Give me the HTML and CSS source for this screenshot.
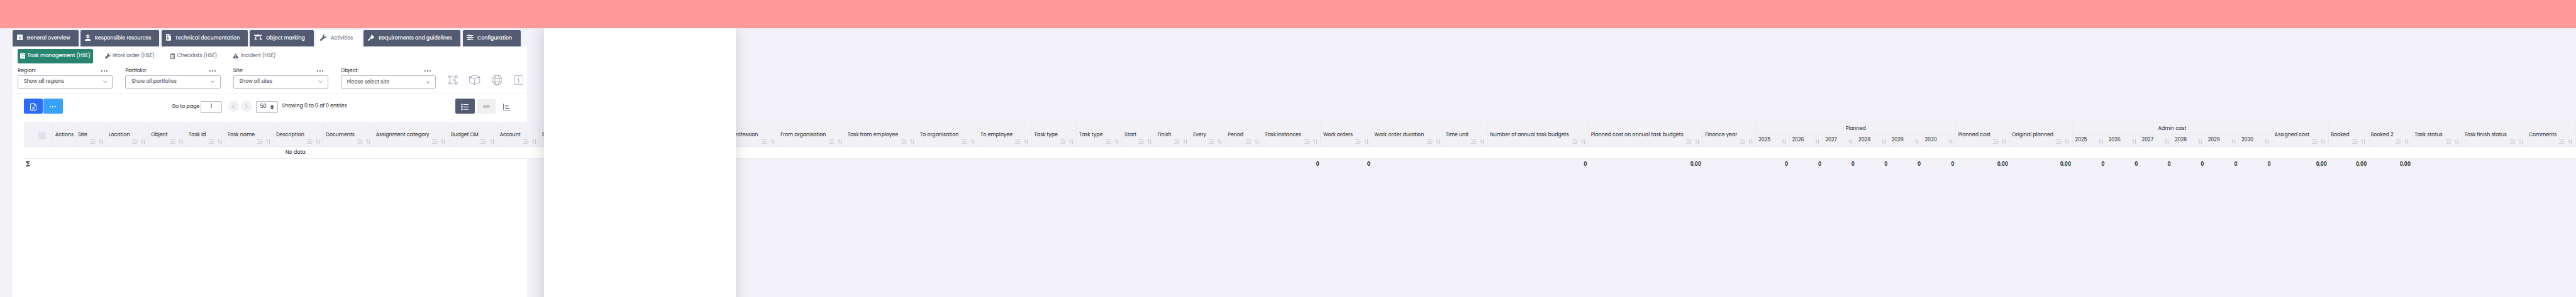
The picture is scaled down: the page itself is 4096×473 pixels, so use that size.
FILE: index.html
```html
<!DOCTYPE html>
<html lang="en">
<head>
<meta charset="utf-8">
<title>Task management</title>
<link rel="stylesheet" href="styles.css">
</head>
<body>
<svg class="sprite" aria-hidden="true">
  <symbol id="menu" viewBox="0 0 14 11"><path d="M0 1h12M2 5.5h12M0 10h12" fill="none" stroke="currentColor" stroke-width="1.2"/></symbol>
  <symbol id="sort" viewBox="0 0 11 11"><path d="M3 11V1M.5 3.5L3 1l2.500 2.500M8.300 0v10M5.800 7.500l2.500 2.500 2.500-2.500" fill="none" stroke="currentColor" stroke-width="1.1"/></symbol>
  <symbol id="wrench" viewBox="0 0 16 16"><path d="M15.700 3.600l-2.600 2.500-2.700-.6-.5-2.600L12.400.3C10.500-.3 8.400.2 7.200 1.800 6.300 3 6.200 4.500 6.700 5.900L.7 11.900a2.200 2.200 0 0 0 3.300 3.300l6-6c1.400.5 3 .3 4.200-.7 1.500-1.200 2-3.200 1.500-4.900zM2.500 14.200a.8.8 0 1 1 0-1.600.8.8 0 0 1 0 1.600z" fill="currentColor"/></symbol>
  <symbol id="chev" viewBox="0 0 10 6"><path d="M.8.8L5 5 9.200.8" fill="none" stroke="currentColor" stroke-width="1.100"/></symbol>
</svg>
<div class="page">
  <header class="banner"></header>
  <main class="main">
    <nav class="tabs">
      <a class="tab t1"><svg width="14" height="14" viewBox="0 0 14 14"><rect width="14" height="14" rx="2" fill="#fff"/><path d="M5.500 6h2v4M5 10.300h4.200" stroke="#525b72" stroke-width="1.200" fill="none"/><rect x="6.200" y="3" width="1.600" height="1.600" fill="#525b72"/></svg>General overview</a>
      <a class="tab t2"><svg width="14" height="15" viewBox="0 0 14 15"><path d="M2.500 4.500h9v.9h-9zM3.200 4C3.200 2 4.500.8 6 .5V3h.4V0h1.200v3H8V.5c1.500.3 2.800 1.500 2.800 3.500zM3.700 6h6.600A3.300 3.300 0 0 1 3.700 6zM0 15c0-3 1.800-4.700 4.200-4.700h5.600C12.200 10.300 14 12 14 15z" fill="#fff"/></svg>Responsible resources</a>
      <a class="tab t3"><svg width="12" height="16" viewBox="0 0 12 16"><path d="M1.500 0H8v4h4v10.500a1.500 1.500 0 0 1-1.500 1.500h-9A1.500 1.500 0 0 1 0 14.500v-13A1.500 1.500 0 0 1 1.500 0zM9 0l3 3H9z" fill="#fff"/><path d="M4 1v6" stroke="#525b72" stroke-width="2" stroke-dasharray="1 1"/><path d="M3 8h2l1 4a2 1.800 0 0 1-4 0z" fill="#525b72"/><circle cx="4" cy="12" r=".8" fill="#fff"/></svg>Technical documentation</a>
      <a class="tab t4"><svg width="19" height="14" viewBox="0 0 19 14"><g fill="none" stroke="#fff" stroke-width="1.600"><path d="M2 2h15M7 2C4.500 3.500 3.500 6 3.500 9.500M12 2c2.500 1.500 3.500 4 3.500 7.500"/><circle cx="3.500" cy="11.500" r="1.700"/><circle cx="15.500" cy="11.500" r="1.700"/></g><path d="M7 0h5v4.500H7z" fill="#fff"/><circle cx="1.500" cy="2" r="1.500" fill="#fff"/><circle cx="17.500" cy="2" r="1.500" fill="#fff"/></svg>Object marking</a>
      <a class="tab t5 on"><svg width="15" height="15"><use href="#wrench"/></svg>Activities</a>
      <a class="tab t6"><svg width="15" height="15" viewBox="0 0 15 15"><path d="M7.500.5l1.800-.5L15 6l-.7 1.700-1.200.2-3 2.700-1.300.2-3.300-3.400.2-1.300L8.400 3zM5 8.200l2 2L2.600 14.600a1 1 0 0 1-1.500 0l-.8-.8a1 1 0 0 1 0-1.400z" fill="#fff"/></svg>Requirements and guidelines</a>
      <a class="tab t7"><svg width="16" height="14" viewBox="0 0 16 14"><g stroke="#fff" stroke-width="1.700" fill="#525b72"><path d="M0 2.300h16M0 7h16M0 11.700h16"/><circle cx="5.500" cy="2.300" r="1.500"/><circle cx="11" cy="7" r="1.500"/><circle cx="5.500" cy="11.700" r="1.500"/></g></svg>Configuration</a>
    </nav>
    <section class="card">
      <nav class="subtabs">
        <a class="sub s1"><svg width="13" height="14" viewBox="0 0 13 14"><path d="M2.500 0h2v1.500h4V0h2v1.500H13V4H0V1.500h2.500zM0 5h13v7.500a1.500 1.500 0 0 1-1.500 1.500h-10A1.500 1.500 0 0 1 0 12.500z" fill="#fff"/><path d="M4 9.300l1.800 1.700L9 7.800" fill="none" stroke="#26846f" stroke-width="1.200"/></svg>Task management (HSE)</a>
        <a class="sub s2"><svg width="13" height="13"><use href="#wrench"/></svg>Work order (HSE)</a>
        <a class="sub s3"><svg width="11" height="13" viewBox="0 0 11 13"><path d="M1 2h9v10.300H1z" fill="none" stroke="currentColor" stroke-width="1.500"/><path d="M3 .5h5V4H3z" fill="currentColor"/><path d="M3 6.500h1M5 6.500h3M3 9h1M5 9h3" stroke="currentColor"/></svg>Checklists (HSE)</a>
        <a class="sub s4"><svg width="14" height="12" viewBox="0 0 14 12"><path d="M7 0l7 12H0z" fill="currentColor"/><path d="M7 4v4M7 9v1.300" stroke="#fff" stroke-width="1.300"/></svg>Incident (HSE)</a>
      </nav>
      <div class="filters">
        <div class="field"><div class="lab">Region:<i class="dots"></i></div><div class="select">Show all regions<svg width="10" height="6"><use href="#chev"/></svg></div></div>
        <div class="field"><div class="lab">Portfolio:<i class="dots"></i></div><div class="select">Show all portfolios<svg width="10" height="6"><use href="#chev"/></svg></div></div>
        <div class="field"><div class="lab">Site:<i class="dots"></i></div><div class="select">Show all sites<svg width="10" height="6"><use href="#chev"/></svg></div></div>
        <div class="field"><div class="lab">Object:<i class="dots"></i></div><div class="select tall">Please select site<svg width="10" height="6"><use href="#chev"/></svg></div></div>
        <div class="tools">
          <svg width="22" height="22" viewBox="0 0 22 22"><path d="M5.500 3h11M3 5.500v11M5.500 19h11M17.500 5.200l-2.500 3.600M17.500 16.800L15 13.200"/><circle cx="3" cy="3" r="2.250"/><circle cx="19" cy="3" r="2.250"/><circle cx="3" cy="19" r="2.250"/><circle cx="19" cy="19" r="2.250"/><circle cx="14" cy="11" r="2.250"/></svg>
          <svg width="26" height="24" viewBox="0 0 26 24"><path d="M13 .8l12 4.200v13.500L13 23.200 1 18.500V5zM1 5l12 4.800L25 5M13 9.800v13.400"/></svg>
          <svg width="25" height="25" viewBox="0 0 25 25"><circle cx="12.500" cy="12.500" r="11.700"/><ellipse cx="12.500" cy="12.500" rx="5.500" ry="11.700"/><path d="M2 8.300h21M2 16.700h21"/></svg>
          <svg width="22" height="22" viewBox="0 0 22 22"><rect x=".8" y=".8" width="20.400" height="20.400" rx="2"/><path d="M8.500 9.500h3v6M8 15.800h7M10.600 6.300h1.600"/></svg>
        </div>
      </div>
      <div class="toolbar">
        <span class="btn blue"><svg width="15" height="19" viewBox="0 0 15 19"><path d="M1 2.500A1.500 1.500 0 0 1 2.500 1H9.500L14 5.500v11a1.500 1.500 0 0 1-1.500 1.500h-10A1.500 1.500 0 0 1 1 16.500zM9.500 1v4.500H14M5 9l5 7M10 9l-5 7" fill="none" stroke="#fff" stroke-width="1.500"/></svg></span>
        <span class="btn sky"><i class="dots big"></i></span>
        <span class="goto">Go to page</span><span class="box num">1</span>
        <span class="round prev"><svg width="6" height="11" viewBox="0 0 6 11"><path d="M5 .7L1 5.500l4 4.800" fill="none" stroke="#9c9cae" stroke-width="1.200"/></svg></span>
        <span class="round"><svg width="6" height="11" viewBox="0 0 6 11"><path d="M1 .7l4 4.800-4 4.800" fill="none" stroke="#9c9cae" stroke-width="1.200"/></svg></span>
        <span class="box size">50<svg width="8" height="11" viewBox="0 0 8 11"><path d="M0 4.700L4 0l4 4.700zM0 6.300h8L4 11z" fill="#333"/></svg></span>
        <span class="showing">Showing 0 to 0 of 0 entries</span>
        <span class="btn dark"><svg width="18" height="16" viewBox="0 0 18 16"><path d="M5.500 2.200H18M5.500 8H18M5.500 13.800H18" stroke="#fff" stroke-width="1.600"/><path d="M.8.8h2.600v2.600H.8zM.8 6.600h2.600v2.600H.8zM.8 12.400h2.600V15H.8z" fill="none" stroke="#fff" stroke-width="1.300"/></svg></span>
        <span class="btn grey"><svg width="16" height="7" viewBox="0 0 16 7"><path d="M0 1.200h16" stroke="#8e939f" stroke-width="2"/><path d="M0 6h16" stroke="#525b72" stroke-width="1.200"/></svg></span>
        <svg class="chart" width="18" height="17" viewBox="0 0 18 17"><path d="M.7 0v14.500q0 1.500 1.500 1.500H18M4.500 4.500h9M4.500 7.700h7M4.500 11.200h11" fill="none" stroke="#525b72" stroke-width="1.300"/></svg>
      </div>
    </section>
    <section class="grid">
      <div class="row head">
        <div class="h check"><i></i></div>
        <div class="h"><b>Actions</b></div>
        <div class="h"><b>Site</b><span><svg class="m"><use href="#menu"/></svg><svg class="s"><use href="#sort"/></svg></span></div>
        <div class="h"><b>Location</b><span><svg class="m"><use href="#menu"/></svg><svg class="s"><use href="#sort"/></svg></span></div>
        <div class="h"><b>Object</b><span><svg class="m"><use href="#menu"/></svg><svg class="s"><use href="#sort"/></svg></span></div>
        <div class="h"><b>Task id</b><span><svg class="m"><use href="#menu"/></svg><svg class="s"><use href="#sort"/></svg></span></div>
        <div class="h"><b>Task name</b><span><svg class="m"><use href="#menu"/></svg><svg class="s"><use href="#sort"/></svg></span></div>
        <div class="h"><b>Description</b><span><svg class="m"><use href="#menu"/></svg><svg class="s"><use href="#sort"/></svg></span></div>
        <div class="h"><b>Documents</b><span><svg class="m"><use href="#menu"/></svg><svg class="s"><use href="#sort"/></svg></span></div>
        <div class="h"><b>Assignment category</b><span><svg class="m"><use href="#menu"/></svg><svg class="s"><use href="#sort"/></svg></span></div>
        <div class="h"><b>Budget OM</b><span><svg class="m"><use href="#menu"/></svg><svg class="s"><use href="#sort"/></svg></span></div>
        <div class="h"><b>Account</b><span><svg class="m"><use href="#menu"/></svg><svg class="s"><use href="#sort"/></svg></span></div>
        <div class="h"><b>S</b></div>
        <div class="h"><b>Profession</b><span><svg class="m"><use href="#menu"/></svg><svg class="s"><use href="#sort"/></svg></span></div>
        <div class="h"><b>From organisation</b><span><svg class="m"><use href="#menu"/></svg><svg class="s"><use href="#sort"/></svg></span></div>
        <div class="h"><b>Task from employee</b><span><svg class="m"><use href="#menu"/></svg><svg class="s"><use href="#sort"/></svg></span></div>
        <div class="h"><b>To organisation</b><span><svg class="m"><use href="#menu"/></svg><svg class="s"><use href="#sort"/></svg></span></div>
        <div class="h"><b>To employee</b><span><svg class="m"><use href="#menu"/></svg><svg class="s"><use href="#sort"/></svg></span></div>
        <div class="h"><b>Task type</b><span><svg class="m"><use href="#menu"/></svg><svg class="s"><use href="#sort"/></svg></span></div>
        <div class="h"><b>Task type</b><span><svg class="m"><use href="#menu"/></svg><svg class="s"><use href="#sort"/></svg></span></div>
        <div class="h"><b>Start</b><span><svg class="m"><use href="#menu"/></svg><svg class="s"><use href="#sort"/></svg></span></div>
        <div class="h"><b>Finish</b><span><svg class="m"><use href="#menu"/></svg><svg class="s"><use href="#sort"/></svg></span></div>
        <div class="h"><b>Every</b><span><svg class="m"><use href="#menu"/></svg><svg class="s"><use href="#sort"/></svg></span></div>
        <div class="h"><b>Period</b><span><svg class="m"><use href="#menu"/></svg><svg class="s"><use href="#sort"/></svg></span></div>
        <div class="h"><b>Task instances</b><span><svg class="m"><use href="#menu"/></svg><svg class="s"><use href="#sort"/></svg></span></div>
        <div class="h"><b>Work orders</b><span><svg class="m"><use href="#menu"/></svg><svg class="s"><use href="#sort"/></svg></span></div>
        <div class="h"><b>Work order duration</b><span><svg class="m"><use href="#menu"/></svg><svg class="s"><use href="#sort"/></svg></span></div>
        <div class="h"><b>Time unit</b><span><svg class="m"><use href="#menu"/></svg><svg class="s"><use href="#sort"/></svg></span></div>
        <div class="h"><b>Number of annual task budgets</b><span><svg class="m"><use href="#menu"/></svg><svg class="s"><use href="#sort"/></svg></span></div>
        <div class="h"><b>Planned cost on annual task budgets</b><span><svg class="m"><use href="#menu"/></svg><svg class="s"><use href="#sort"/></svg></span></div>
        <div class="h"><b>Finance year</b><span><svg class="m"><use href="#menu"/></svg><svg class="s"><use href="#sort"/></svg></span></div>
        <div class="group"><div class="gt">Planned</div>
          <div class="y">2025<svg class="s"><use href="#sort"/></svg></div><div class="y">2026<svg class="s"><use href="#sort"/></svg></div><div class="y">2027<svg class="s"><use href="#sort"/></svg></div><div class="y">2028<svg class="s"><use href="#sort"/></svg></div><div class="y">2029<svg class="s"><use href="#sort"/></svg></div><div class="y">2030<svg class="s"><use href="#sort"/></svg></div></div>
        <div class="h"><b>Planned cost</b><span><svg class="m"><use href="#menu"/></svg><svg class="s"><use href="#sort"/></svg></span></div>
        <div class="h"><b>Original planned</b><span><svg class="m"><use href="#menu"/></svg><svg class="s"><use href="#sort"/></svg></span></div>
        <div class="group"><div class="gt">Admin cost</div>
          <div class="y">2025<svg class="s"><use href="#sort"/></svg></div><div class="y">2026<svg class="s"><use href="#sort"/></svg></div><div class="y">2027<svg class="s"><use href="#sort"/></svg></div><div class="y">2028<svg class="s"><use href="#sort"/></svg></div><div class="y">2029<svg class="s"><use href="#sort"/></svg></div><div class="y">2030<svg class="s"><use href="#sort"/></svg></div></div>
        <div class="h"><b>Assigned cost</b><span><svg class="m"><use href="#menu"/></svg><svg class="s"><use href="#sort"/></svg></span></div>
        <div class="h"><b>Booked</b><span><svg class="m"><use href="#menu"/></svg><svg class="s"><use href="#sort"/></svg></span></div>
        <div class="h"><b>Booked 2</b><span><svg class="m"><use href="#menu"/></svg><svg class="s"><use href="#sort"/></svg></span></div>
        <div class="h"><b>Task status</b><span><svg class="m"><use href="#menu"/></svg><svg class="s"><use href="#sort"/></svg></span></div>
        <div class="h"><b>Task finish status</b><span><svg class="m"><use href="#menu"/></svg><svg class="s"><use href="#sort"/></svg></span></div>
        <div class="h"><b>Comments</b><span><svg class="m"><use href="#menu"/></svg><svg class="s"><use href="#sort"/></svg></span></div>
      </div>
      <div class="empty">No data</div>
      <div class="row foot">
        <div class="sigma">Σ</div>
        <div class="v c25">0</div><div class="v">0</div>
        <div class="v c29">0</div><div class="v">0,00</div>
        <div class="v c32">0</div><div class="v">0</div><div class="v">0</div><div class="v">0</div><div class="v">0</div><div class="v">0</div>
        <div class="v">0,00</div><div class="v">0,00</div>
        <div class="v">0</div><div class="v">0</div><div class="v">0</div><div class="v">0</div><div class="v">0</div><div class="v">0</div>
        <div class="v">0,00</div><div class="v">0,00</div><div class="v">0,00</div>
      </div>
    </section>
  </main>
  <aside class="panel"></aside>
</div>
</body>
</html>
```

FILE: styles.css
```css
html { background: #f3f2f9; overflow: hidden; }
body { margin: 0; }
* { box-sizing: border-box; }
.sprite { position: absolute; width: 0; height: 0; }
svg { display: block; flex: none; }
.page {
  zoom: 0.6707;
  position: relative;
  width: 6107px;
  height: 706px;
  overflow: hidden;
  font: 11.8px/18px Poppins, Inter, sans-serif;
  color: #212529;
  white-space: nowrap;
  background: #f3f2f9;
}
.banner { height: 67px; background: #ff9a9a; }
.main {
  height: 639px;
  padding: 5px 0 0 30px;
  background: linear-gradient(#fff, #fff) 30px 43px / 1220px 600px no-repeat;
}

/* primary tabs */
.tabs { display: flex; gap: 5px; height: 38px; }
.tab {
  display: flex;
  align-items: center;
  padding-left: 10px;
  border-radius: 3px 3px 0 0;
  background: #525b72;
  color: #fff;
  font-weight: 500;
}
.tab svg { position: relative; top: -2px; }
.tab.on { background: #fff; color: #525b72; font-weight: 400; }
.t1 { width: 156px; gap: 9.5px; }
.t2 { width: 187px; gap: 10px; }
.t3 { width: 204px; gap: 10.5px; }
.t4 { width: 151.5px; gap: 10px; }
.t5 { width: 109px; gap: 11px; }
.t6 { width: 229.5px; gap: 10.5px; }
.t7 { width: 137.5px; gap: 9px; }

/* secondary tabs */
.card { width: 1220px; height: 181px; }
.subtabs { display: flex; padding: 6px 0 0 12px; height: 40px; }
.sub { display: flex; align-items: center; height: 34px; gap: 5px; color: #525b72; }
.s1 { width: 178px; padding-left: 5px; border-radius: 3px; background: #26846f; color: #fff; font-weight: 500; }
.s2 { width: 155px; margin-left: 29px; }
.s3 { width: 148px; }

/* filters */
.filters { display: flex; gap: 30px; height: 74px; padding: 9px 0 0 12px; border-bottom: 1px solid #efeff3; }
.field { width: 225.4px; flex: none; }
.lab { display: flex; justify-content: space-between; align-items: center; height: 18px; padding-right: 12px; }
.dots { width: 15px; height: 3px; background: radial-gradient(circle at 1.5px 1.5px, #525b72 1.3px, transparent 1.7px) 0 0 / 6px 3px; }
.select {
  display: flex;
  align-items: center;
  justify-content: space-between;
  height: 31px;
  margin-top: 2px;
  padding: 0 12px 0 13px;
  border: 1px solid #b1b7c5;
  border-radius: 3px;
  color: #3c4248;
}
.tall { height: 32px; }
.tools { display: flex; flex: none; align-items: center; gap: 27px; height: 24px; margin-top: 19px; }
.tools svg { fill: none; stroke: #a9a9bd; stroke-width: 1.5; }

/* toolbar */
.toolbar { display: flex; align-items: center; height: 60px; padding: 0 0 3px 26px; }
.btn { display: flex; align-items: center; justify-content: center; width: 45px; height: 36px; border-radius: 3px; }
.blue { background: #2a6cff; padding-top: 3px; }
.sky { background: #38a1f9; margin-left: 2.5px; padding-top: 2px; }
.big { background-image: radial-gradient(circle at 1.5px 1.5px, #fff 1.3px, transparent 1.7px); }
.goto { width: 69px; margin-left: 258.5px; padding-top: 2px; }
.box { display: flex; align-items: center; justify-content: center; height: 28px; margin-top: 3px; border: 1px solid #b1b7c5; border-radius: 3px; }
.num { width: 50px; padding-bottom: 2px; }
.round { display: flex; align-items: center; justify-content: center; width: 26px; height: 26px; border-radius: 50%; background: #f0f0f5; margin-left: 4.5px; }
.prev { margin-left: 15px; }
.size { width: 51px; margin-left: 10px; gap: 10px; }
.showing { width: 411px; margin-left: 10px; }
.dark { background: #525b72; width: 46px; padding-top: 3px; }
.grey { background: #efefef; width: 44px; margin-left: 6px; padding-top: 2px; }
.chart { margin: 3px 0 0 17px; }

/* data grid */
.grid { margin-left: 26px; width: 6051px; }
.row {
  display: grid;
  grid-template-columns: 69.5px 54.2px 72.8px 100.2px 89.3px 92px 115.5px 117.9px 118.4px 177.8px 115.8px 100.2px 452px 113.4px 159px 171.7px 143.3px 127.6px 106.4px 107.7px 78.1px 84.7px 82.1px 87.3px 138.7px 121.4px 169px 105.3px 239.3px 270.9px 126.3px 79.5px 79px 78.5px 78.6px 78.6px 79.4px 127.6px 149.2px 79.5px 78.9px 78.1px 78.5px 79.4px 79px 133.4px 94.5px 103.9px 118.2px 152.5px 116.9px;
}
.head { height: 58px; background: #f2f1f6; border-top: 1px solid #ececf2; border-bottom: 2px solid #e8e7f1; }
.h { display: grid; grid-template-rows: 1fr 18px 1fr; padding: 0 6px 0 5.5px; border-right: 1px solid #ebeaf2; }
.h b { grid-row: 2; font-weight: 400; }
.h span { grid-row: 3; display: flex; justify-content: flex-end; gap: 7px; padding-top: 2px; }
.m { width: 14px; height: 11px; color: #c3c3ca; }
.s { width: 11px; height: 11px; color: #b9b9c1; }
.check i { grid-row: 2; width: 18px; height: 18px; margin: 2px 0 0 29px; border-radius: 3px; background: #e0e3eb; }
.group { grid-column: span 6; display: grid; grid-template-columns: subgrid; grid-template-rows: 28px 27px; }
.gt { grid-column: span 6; text-align: center; line-height: 27px; border-right: 1px solid #ebeaf2; border-bottom: 1px solid #ebeaf2; }
.y { display: flex; justify-content: space-between; line-height: 25px; padding: 0 6px 0 5.5px; border-right: 1px solid #ebeaf2; }
.y .s { margin-top: 10px; }
.empty { height: 28px; padding-left: 621px; line-height: 27px; background: #fff; border-bottom: 1px solid #ebeaf0; }
.foot { height: 28px; line-height: 26px; font-weight: 600; }
.sigma { padding-left: 4px; font: 700 17px/26px "DejaVu Serif", serif; }
.v { padding-right: 4px; text-align: right; }
.c25 { grid-column: 25; }
.c29 { grid-column: 29; }
.c32 { grid-column: 32; }

/* overlay side panel */
.panel {
  position: absolute;
  top: 67px;
  left: 1290px;
  width: 455px;
  height: 660px;
  background: #fff;
  box-shadow: -2px 0 34px rgba(40, 40, 60, 0.22);
  clip-path: inset(0 -60px);
}
```
